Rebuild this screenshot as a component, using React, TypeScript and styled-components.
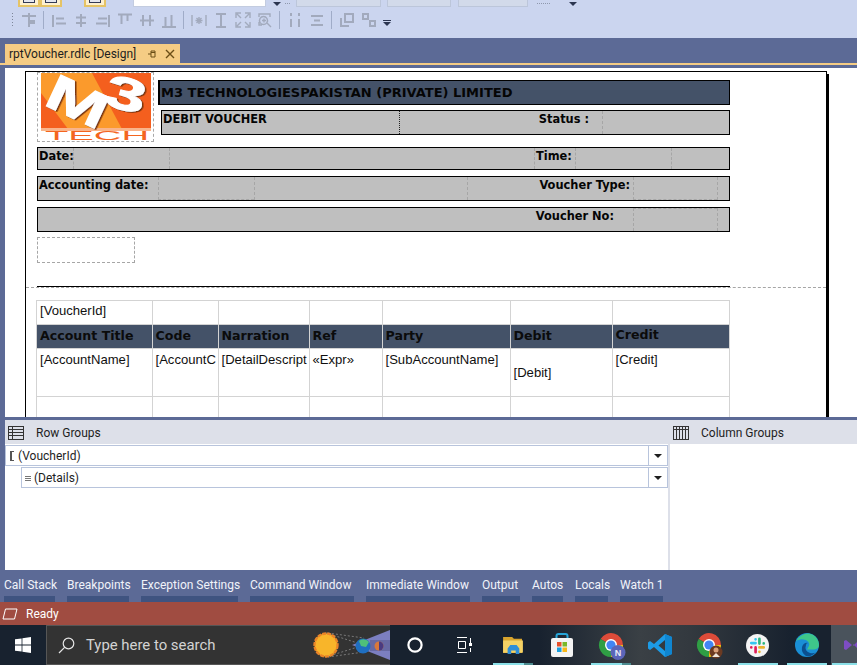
import React from "react";
import styled, { createGlobalStyle } from "styled-components";

const Global = createGlobalStyle`
  html, body {
    margin: 0;
    padding: 0;
    height: 665px;
    overflow: hidden;
    background: #5c6a96;
  }
  * { box-sizing: border-box; }
`;

const Shell = styled.div`
  width: 857px;
  height: 665px;
  display: flex;
  flex-direction: column;
  overflow: hidden;
  font-family: Roboto, "Noto Sans", sans-serif;
`;

/* ---------- toolbars ---------- */

const Toolbar = styled.div`
  height: 38px;
  flex: none;
  background: #cbd5ef;
`;

const ClippedRow = styled.div`
  height: 7px;
  display: flex;
  align-items: flex-end;
  overflow: hidden;
  padding-left: 18px;
`;

const ToolToggle = styled.div<{ $after?: number }>`
  width: 22px;
  height: 20px;
  flex: none;
  display: flex;
  align-items: flex-end;
  padding: 0 3px 2px;
  background: #fdf0d0;
  border: 2px solid #e5c365;
  margin-right: ${(p) => p.$after ?? 0}px;
  &::after {
    content: "";
    display: block;
    width: 100%;
    height: 10px;
    border: 1px solid #333a55;
    background: #e4e6ee;
  }
`;

const ClippedCombo = styled.div<{ $w: number; $after: number; $off?: boolean }>`
  width: ${(p) => p.$w}px;
  height: 20px;
  flex: none;
  margin-right: ${(p) => p.$after}px;
  background: ${(p) => (p.$off ? "#d2daea" : "#ffffff")};
  border: 1px solid ${(p) => (p.$off ? "#bcc6da" : "#c3cce0")};
`;

const MiniArrow = styled.div<{ $after: number }>`
  width: 0;
  height: 0;
  flex: none;
  margin: 0 ${(p) => p.$after}px 1px 0;
  border-left: 4px solid transparent;
  border-right: 4px solid transparent;
  border-top: 4px solid #2b3550;
`;

const DotRun = styled.div<{ $w: number; $after: number }>`
  width: ${(p) => p.$w}px;
  flex: none;
  margin: 0 ${(p) => p.$after}px 3px 0;
  border-top: 1px dotted #8f98ad;
`;

const IconRow = styled.div`
  display: flex;
  align-items: center;
  height: 18px;
  margin-top: 4px;
  padding-left: 11px;
  color: #a2aabd;
`;

const Grip = styled.div`
  width: 4px;
  height: 16px;
  margin-right: 3px;
  background-image: radial-gradient(#7d8699 0.8px, transparent 1px);
  background-size: 3px 3px;
`;

const Sep = styled.div`
  width: 1px;
  height: 18px;
  margin: 0 4px 0 3px;
  background: #a0acc8;
`;

const IconBox = styled.svg`
  width: 22px;
  height: 16px;
  flex: none;
  fill: none;
  stroke: currentColor;
`;

const OverflowArrow = styled.div`
  margin: 6px 0 0 3px;
  width: 8px;
  border-top: 1px solid #2b3550;
  padding-top: 1px;
  &::after {
    content: "";
    display: block;
    border-left: 4px solid transparent;
    border-right: 4px solid transparent;
    border-top: 4px solid #2b3550;
  }
`;

const groupA = [
  "M8 1V15M1 4H15M8 9H14M8 11H14",
];
const groupB = [
  "M2 3V15M5 6.5H13M5 11.5H15",
  "M8 2V15M3 5.5H13M3 11H13",
  "M14 3V15M3 6.5H12M1 11.5H12",
  "M1 2.5H15M4.5 3V12M10.5 3V9",
  "M1 8.5H15M4 3V14M11 3V14",
  "M1 15H15M4.5 5V14M10.5 3V14",
];
const groupC = [
  "M1 3V14M15 3V14M4.5 8.5H11.5M8 5V12M5.5 6L10.5 11M10.5 6L5.5 11",
  "M3 2H13M3 15H13M8 2V15",
  "M1 6V1H6M10 1H15V6M1 10V15H6M15 10V15H10M2 2L6 6M14 2L10 6M2 14L6 10M14 14L10 10",
  "M2 5V2H13V5M2 10V13H5M6.5 4.5a4 4 0 1 0 .01 0M10 11L14 15M5 8.5H9M7 6.5V10.5",
];
const groupD = [
  "M4 1V4M4 7V15M12 1V4M12 7V15",
  "M2 4H14M5 8.5H11M2 13H14",
];
const groupE = [
  "M6 2H14V10H6ZM2 6V14H10",
  "M2 2H7V7H2ZM9 9H14V14H9Z",
];

const Glyphs = ({ list }: { list: string[] }) => (
  <>
    {list.map((d) => (
      <IconBox key={d} viewBox="-3 0 22 16" strokeWidth={d.length > 40 ? 1.4 : 2}>
        <path d={d} />
      </IconBox>
    ))}
  </>
);

/* ---------- document tab ---------- */

const TabStrip = styled.div`
  height: 30px;
  flex: none;
  background: #5c6a96;
  padding-top: 6px;
`;

const DocTab = styled.div`
  margin-left: 5px;
  width: 175px;
  height: 19px;
  background: #f5cc84;
  display: flex;
  align-items: center;
  gap: 8px;
  padding: 0 5px 0 4px;
  color: #1e1e1e;
  font-size: 12px;
  white-space: nowrap;
`;

const TabLabel = styled.span`
  flex: 1;
`;

const TabGlyph = styled.svg`
  width: 10px;
  height: 10px;
  flex: none;
  stroke: #6b4e16;
  fill: none;
`;

const TabRule = styled.div`
  height: 2px;
  background: #f5cc84;
`;

/* ---------- report surface ---------- */

const Designer = styled.div`
  height: 349px;
  flex: none;
  padding-left: 5px;
  background: #5c6a96;
`;

const Surface = styled.div`
  height: 100%;
  background: #ffffff;
  padding: 3px 0 0 20px;
  overflow: hidden;
`;

const Page = styled.div`
  width: 802px;
  height: 500px;
  border: 1px solid #000;
  box-shadow: 2px 3px 0 #000;
  padding-left: 11px;
`;

const Masthead = styled.div`
  display: flex;
  align-items: flex-start;
  width: 693px;
`;

const LogoFrame = styled.div`
  width: 117px;
  height: 70px;
  flex: none;
  border: 1px dashed #a8a8a8;
  padding: 0 2px;
`;

const LogoArt = styled.svg`
  display: block;
  width: 111px;
  height: 67px;
  overflow: visible;
`;

const HeadColumn = styled.div`
  flex: 1;
  margin-left: 4px;
  padding-top: 8px;
`;

const TitleBar = styled.div`
  height: 25px;
  background: #445268;
  border: 1px solid #000;
  border-left-width: 2px;
  display: flex;
  align-items: center;
  padding-left: 1px;
  font: bold 13px "DejaVu Sans", Verdana, sans-serif;
  color: #050505;
  white-space: nowrap;
`;

const Bar = styled.div<{ $cols: string; $h: number; $mt: number; $ml?: number }>`
  display: grid;
  grid-template-columns: ${(p) => p.$cols};
  height: ${(p) => p.$h}px;
  margin-top: ${(p) => p.$mt}px;
  margin-left: ${(p) => p.$ml ?? 0}px;
  width: ${(p) => 693 - (p.$ml ?? 0)}px;
  background: #bfbfbf;
  border: 1px solid #000;
`;

const SubBar = styled(Bar)`
  width: 569px;
`;

const Cell = styled.div<{
  $dash?: "top" | "bottom";
  $dark?: boolean;
  $right?: number;
  $plain?: boolean;
}>`
  min-width: 0;
  padding: 1px ${(p) => p.$right ?? 0}px 0 1px;
  text-align: ${(p) => (p.$right != null ? "right" : "left")};
  font: bold 11.4px "DejaVu Sans", Verdana, sans-serif;
  color: #050505;
  white-space: nowrap;
  border-left: ${(p) => (p.$plain ? "0" : p.$dark ? "1px dotted #222" : "1px dashed #a6a6a6")};
  ${(p) => (p.$dash === "top" ? "border-top: 1px dashed #a6a6a6;" : "")}
  ${(p) => (p.$dash === "bottom" ? "border-bottom: 1px dashed #a6a6a6;" : "")}
`;

const EmptyBox = styled.div`
  width: 98px;
  height: 26px;
  margin-top: 5px;
  border: 1px dashed #a6a6a6;
`;

const BlackRule = styled.div`
  width: 693px;
  height: 1px;
  margin-top: 23px;
  background: #000;
`;

const PageBreak = styled.div`
  margin-left: -11px;
  width: 800px;
  border-top: 1px dashed #a6a6a6;
`;

const ReportTable = styled.table`
  width: 693px;
  margin: 12px 0 0 -1px;
  table-layout: fixed;
  border-collapse: collapse;
`;

const Td = styled.td<{ $h?: number; $drop?: number }>`
  height: ${(p) => p.$h ?? 24}px;
  padding: ${(p) => 1 + (p.$drop ?? 0)}px 3px 0 3px;
  vertical-align: top;
  border: 1px solid #d3d3d3;
  font: 13.1px "Liberation Sans", Arial, sans-serif;
  color: #101010;
  white-space: nowrap;
  overflow: hidden;
`;

const HeadTd = styled.td<{ $up?: boolean }>`
  height: 24px;
  padding: ${(p) => (p.$up ? 2 : 3)}px 0 0 3px;
  vertical-align: top;
  background: #445268;
  border: 1px solid #d3d3d3;
  font: bold 12.6px "DejaVu Sans", Verdana, sans-serif;
  line-height: 15px;
  color: #0b0b0b;
  white-space: nowrap;
  overflow: hidden;
`;

/* ---------- grouping pane ---------- */

const GroupPane = styled.div`
  height: 153px;
  flex: none;
  display: flex;
  background: #ffffff;
  border-left: 5px solid #5c6a96;
  border-top: 3px solid #5c6a96;
`;

const PaneColumn = styled.div<{ $w?: number }>`
  ${(p) => (p.$w ? `width: ${p.$w}px; flex: none;` : "flex: 1;")}
`;

const PaneHead = styled.div<{ $gap: number }>`
  height: 24px;
  display: flex;
  align-items: center;
  gap: ${(p) => p.$gap}px;
  padding: 2px 0 0 3px;
  background: #dde0e9;
  font-size: 12px;
  color: #1e1e1e;
`;

const PaneBody = styled.div`
  height: 126px;
  border-right: 2px solid #dde0e9;
  padding-top: 1px;
`;

const GroupRow = styled.div<{ $indent: number }>`
  height: 21px;
  margin: 0 0 1px ${(p) => p.$indent}px;
  display: flex;
  align-items: center;
  border: 1px solid #b8c4dc;
  font-size: 12px;
  color: #1e1e1e;
`;

const RowMark = styled.div`
  flex: none;
  width: 4px;
  height: 10px;
  margin: 0 4px 0 4px;
  border-left: 2px solid #555;
  border-top: 1px solid #555;
  border-bottom: 1px solid #555;
`;

const DetailMark = styled.div`
  flex: none;
  width: 6px;
  height: 5px;
  margin: 1px 3px 0 3px;
  border-top: 1px solid #777;
  border-bottom: 1px solid #777;
  background: linear-gradient(#777, #777) center / 100% 1px no-repeat;
`;

const RowLabel = styled.span`
  flex: 1;
`;

const RowDrop = styled.div`
  width: 19px;
  height: 100%;
  flex: none;
  border-left: 1px solid #b8c4dc;
  display: flex;
  align-items: center;
  justify-content: center;
  &::after {
    content: "";
    border-left: 4px solid transparent;
    border-right: 4px solid transparent;
    border-top: 4px solid #1e1e1e;
  }
`;

/* ---------- tool windows, status, taskbar ---------- */

const ToolTabs = styled.div`
  height: 32px;
  flex: none;
  display: flex;
  gap: 12px;
  padding-left: 4px;
  background: #5c6a96;
`;

const ToolTab = styled.div<{ $w: number }>`
  width: ${(p) => p.$w}px;
  flex: none;
  display: flex;
  flex-direction: column;
  justify-content: flex-end;
  font-size: 12px;
  line-height: 16px;
  color: #f1f3fa;
  white-space: nowrap;
  &::after {
    content: "";
    display: block;
    height: 6px;
    margin-top: 3px;
    background: #3f5380;
  }
`;

const StatusBar = styled.div`
  height: 23px;
  flex: none;
  display: flex;
  align-items: center;
  gap: 8px;
  padding-left: 2px;
  background: #a04c41;
  font-size: 12px;
  color: #ffffff;
`;

const Taskbar = styled.div`
  height: 40px;
  flex: none;
  display: flex;
  background: linear-gradient(90deg, #18222f 0, #18222f 540px, #3a4045 640px, #33393f 690px, #18222f 790px);
`;

const StartButton = styled.div`
  width: 46px;
  flex: none;
  display: flex;
  align-items: center;
  justify-content: center;
`;

const SearchBox = styled.div`
  width: 344px;
  flex: none;
  display: flex;
  align-items: center;
  background: #333333;
  border: 1px solid #565656;
  border-right: 0;
  padding-left: 11px;
  color: #d3d3d3;
  font-size: 14.9px;
  white-space: nowrap;
`;

const SearchText = styled.span`
  margin-left: 11px;
  flex: 1;
`;

const TaskButton = styled.div<{ $run?: "stack" | "wide"; $lit?: boolean; $w?: number }>`
  position: relative;
  width: ${(p) => p.$w ?? 49}px;
  flex: none;
  display: flex;
  align-items: center;
  justify-content: ${(p) => (p.$lit ? "flex-start" : "center")};
  padding-left: ${(p) => (p.$lit ? 12 : 0)}px;
  overflow: hidden;
  background: ${(p) => (p.$lit ? "#4a535c" : "transparent")};
  &::after {
    content: ${(p) => (p.$run ? '""' : "none")};
    position: absolute;
    bottom: 0;
    left: ${(p) => (p.$lit ? 1 : 5)}px;
    right: ${(p) => (p.$lit ? 0 : 4)}px;
    height: 2px;
    background: ${(p) =>
      p.$run === "stack"
        ? "linear-gradient(90deg, #8be0e8 0, #8be0e8 31px, #4d8b8f 31px)"
        : "#8be0e8"};
  }
`;

const TaskIcon = styled.svg`
  display: block;
  flex: none;
`;

const ChromeMark = () => (
  <>
    <path d="M12 12L1.6 6A12 12 0 0 1 24 12Z" fill="#dd4b39" />
    <path d="M12 12L24 12A12 12 0 0 1 12 24Z" fill="#f4c20d" />
    <path d="M12 12L12 24A12 12 0 0 1 1.6 6Z" fill="#2f9e44" />
    <circle cx="12" cy="12" r="6" fill="#ffffff" />
    <circle cx="12" cy="12" r="4.6" fill="#4285f4" />
  </>
);

const columns = [115.5, 66, 91, 73, 128, 102, 117.5];

export default function App() {
  return (
    <Shell>
      <Global />
      <Toolbar>
        <ClippedRow>
          <ToolToggle />
          <ToolToggle $after={22} />
          <ToolToggle $after={27} />
          <ClippedCombo $w={133} $after={7} />
          <MiniArrow $after={4} />
          <DotRun $w={5} $after={6} />
          <ClippedCombo $w={85} $after={6} $off />
          <ClippedCombo $w={64} $after={7} $off />
          <ClippedCombo $w={70} $after={9} $off />
          <DotRun $w={13} $after={19} />
          <MiniArrow $after={0} />
        </ClippedRow>
        <IconRow>
          <Grip />
          <Glyphs list={groupA} />
          <Sep />
          <Glyphs list={groupB} />
          <Sep />
          <Glyphs list={groupC} />
          <Sep />
          <Glyphs list={groupD} />
          <Sep />
          <Glyphs list={groupE} />
          <OverflowArrow />
        </IconRow>
      </Toolbar>

      <TabStrip>
        <DocTab>
          <TabLabel>rptVoucher.rdlc [Design]</TabLabel>
          <TabGlyph viewBox="0 0 10 10">
            <path d="M1 5H4M4 2V8H8V2ZM4 3.5H8" />
          </TabGlyph>
          <TabGlyph viewBox="0 0 10 10" strokeWidth={1.4}>
            <path d="M1 1L9 9M9 1L1 9" />
          </TabGlyph>
        </DocTab>
        <TabRule />
      </TabStrip>

      <Designer>
        <Surface>
          <Page>
            <Masthead>
              <LogoFrame>
                <LogoArt viewBox="0 0 111 67">
                  <defs>
                    <filter id="logoShade" x="-10%" y="-10%" width="120%" height="120%">
                      <feDropShadow dx="1.5" dy="1" stdDeviation="0.3" floodColor="#7a3410" />
                    </filter>
                  </defs>
                  <rect x="1" y="0" width="110" height="56" fill="#f45f1e" />
                  <path d="M1 0H52L82 56H28L1 20Z" fill="#fb9a2c" />
                  <rect x="1" y="55" width="110" height="3" fill="#f9b48a" />
                  <g
                    filter="url(#logoShade)"
                    fill="#ffffff"
                    stroke="#ffffff"
                    strokeWidth="1"
                    fontFamily="Liberation Sans, Arial, sans-serif"
                    fontWeight="bold"
                  >
                    <text transform="translate(2 31) rotate(25) scale(1.5 1)" fontSize="50">M</text>
                    <text transform="translate(62 31) rotate(15) scale(1.6 1)" fontSize="46">3</text>
                  </g>
                  <text
                    x="5"
                    y="67"
                    fontSize="12.5"
                    fill="#f4651f"
                    fontFamily="Liberation Sans, Arial, sans-serif"
                    textLength="104"
                    lengthAdjust="spacingAndGlyphs"
                  >
                    TECH
                  </text>
                </LogoArt>
              </LogoFrame>
              <HeadColumn>
                <TitleBar>M3 TECHNOLOGIESPAKISTAN (PRIVATE) LIMITED</TitleBar>
                <SubBar $cols="237px 203px 1fr" $h={25} $mt={5} $ml={3}>
                  <Cell $plain>DEBIT VOUCHER</Cell>
                  <Cell $dark $right={13}>
                    Status :
                  </Cell>
                  <Cell />
                </SubBar>
              </HeadColumn>
            </Masthead>

            <Bar $cols="35px 96px 365px 41px 96px 1fr" $h={23} $mt={5}>
              <Cell $plain>Date:</Cell>
              <Cell />
              <Cell />
              <Cell>Time:</Cell>
              <Cell />
              <Cell />
            </Bar>
            <Bar $cols="120px 96px 213px 166px 84px 1fr" $h={25} $mt={6}>
              <Cell $plain>Accounting date:</Cell>
              <Cell $dash="bottom" />
              <Cell />
              <Cell $right={3}>Voucher Type:</Cell>
              <Cell $dash="bottom" />
              <Cell />
            </Bar>
            <Bar $cols="595px 84px 1fr" $h={25} $mt={6}>
              <Cell $plain $right={19}>
                Voucher No:
              </Cell>
              <Cell $dash="top" />
              <Cell />
            </Bar>
            <EmptyBox />
            <BlackRule />
            <PageBreak />

            <ReportTable>
              <colgroup>
                {columns.map((w, i) => (
                  <col key={i} style={{ width: w }} />
                ))}
              </colgroup>
              <tbody>
                <tr>
                  <Td $drop={1}>[VoucherId]</Td>
                  <Td /><Td /><Td /><Td /><Td /><Td />
                </tr>
                <tr>
                  <HeadTd>Account Title</HeadTd>
                  <HeadTd>Code</HeadTd>
                  <HeadTd>Narration</HeadTd>
                  <HeadTd>Ref</HeadTd>
                  <HeadTd>Party</HeadTd>
                  <HeadTd>Debit</HeadTd>
                  <HeadTd $up>Credit</HeadTd>
                </tr>
                <tr>
                  <Td $h={48} $drop={2}>[AccountName]</Td>
                  <Td $h={48} $drop={2}>[AccountC</Td>
                  <Td $h={48} $drop={2}>[DetailDescript</Td>
                  <Td $h={48} $drop={2}>«Expr»</Td>
                  <Td $h={48} $drop={2}>[SubAccountName]</Td>
                  <Td $h={48} $drop={15}>[Debit]</Td>
                  <Td $h={48} $drop={2}>[Credit]</Td>
                </tr>
                <tr>
                  <Td /><Td /><Td /><Td /><Td /><Td /><Td />
                </tr>
              </tbody>
            </ReportTable>
          </Page>
        </Surface>
      </Designer>

      <GroupPane>
        <PaneColumn $w={665}>
          <PaneHead $gap={12}>
            <svg width="16" height="14" viewBox="0 0 16 14" fill="none" stroke="#333">
              <rect x="0.5" y="0.5" width="15" height="13" />
              <path d="M0 3.5H16M0 6.5H16M0 9.5H16M4.5 0V14" />
            </svg>
            Row Groups
          </PaneHead>
          <PaneBody>
            <GroupRow $indent={0}>
              <RowMark />
              <RowLabel>(VoucherId)</RowLabel>
              <RowDrop />
            </GroupRow>
            <GroupRow $indent={16}>
              <DetailMark />
              <RowLabel>(Details)</RowLabel>
              <RowDrop />
            </GroupRow>
          </PaneBody>
        </PaneColumn>
        <PaneColumn>
          <PaneHead $gap={12}>
            <svg width="16" height="14" viewBox="0 0 16 14" fill="none" stroke="#333">
              <rect x="0.5" y="0.5" width="15" height="13" />
              <path d="M0 3.5H16M3.5 0V14M6.5 0V14M9.5 0V14M12.5 0V14" />
            </svg>
            Column Groups
          </PaneHead>
        </PaneColumn>
      </GroupPane>

      <ToolTabs>
        <ToolTab $w={51}>Call Stack</ToolTab>
        <ToolTab $w={62}>Breakpoints</ToolTab>
        <ToolTab $w={97}>Exception Settings</ToolTab>
        <ToolTab $w={104}>Command Window</ToolTab>
        <ToolTab $w={104}>Immediate Window</ToolTab>
        <ToolTab $w={38}>Output</ToolTab>
        <ToolTab $w={31}>Autos</ToolTab>
        <ToolTab $w={33}>Locals</ToolTab>
        <ToolTab $w={43}>Watch 1</ToolTab>
      </ToolTabs>

      <StatusBar>
        <svg width="16" height="12" viewBox="0 0 16 12" fill="none" stroke="#fff">
          <path d="M3.5 1H15L12.5 11H1Z" />
        </svg>
        Ready
      </StatusBar>

      <Taskbar>
        <StartButton>
          <TaskIcon width="16" height="16" viewBox="0 0 16 16" fill="#ffffff">
            <path d="M0 2.3L6.6 1.4V7.6H0ZM7.4 1.3L16 0V7.6H7.4ZM0 8.4H6.6V14.6L0 13.7ZM7.4 8.4H16V16L7.4 14.7Z" />
          </TaskIcon>
        </StartButton>
        <SearchBox>
          <TaskIcon width="17" height="17" viewBox="0 0 17 17" fill="none" stroke="#e6e6e6" strokeWidth="1.2">
            <circle cx="10.5" cy="6.5" r="5.3" />
            <path d="M6.6 10.4L1 16" />
          </TaskIcon>
          <SearchText>Type here to search</SearchText>
          <TaskIcon width="78" height="38" viewBox="0 0 78 38">
            <path d="M40 19L78 4V34Z" fill="#7c7fc0" />
            <path d="M58 14H78V25H58Z" fill="#5a5a90" opacity="0.6" />
            <path d="M14 7L52 19M14 31L52 19M16 7L52 12M16 31L52 26" stroke="#8a8a8a" strokeWidth="0.8" strokeDasharray="2 2" fill="none" />
            <circle cx="14" cy="19" r="11.5" fill="#f8b52a" stroke="#ea8428" strokeWidth="2.4" strokeDasharray="4 1" />
            <circle cx="51" cy="20" r="7.5" fill="#1f6fc0" />
            <path d="M47 15a7 7 0 0 1 10 1l-3 5-5-1Z" fill="#4fc07a" />
            <circle cx="67" cy="20" r="4.5" fill="#d9783a" />
            <path d="M67 15.5a4.5 4.5 0 0 1 0 9Z" fill="#4a3a80" />
          </TaskIcon>
        </SearchBox>
        <TaskButton>
          <TaskIcon width="16" height="16" viewBox="0 0 16 16" fill="none" stroke="#ffffff" strokeWidth="2.2">
            <circle cx="8" cy="8" r="6.6" />
          </TaskIcon>
        </TaskButton>
        <TaskButton>
          <TaskIcon width="16" height="16" viewBox="0 0 16 16" fill="none" stroke="#ffffff">
            <path d="M1 0.5H11M1 15.5H11M2.5 4.5H9.5V11.5H2.5ZM14.5 1V6M14.5 11V15" />
            <rect x="13" y="6" width="3" height="3" fill="#ffffff" stroke="none" />
          </TaskIcon>
        </TaskButton>
        <TaskButton $run="stack">
          <TaskIcon width="22" height="18" viewBox="0 0 24 20">
            <path d="M1 1H11L13 3H22V19H1Z" fill="#d9a52e" />
            <path d="M1 5H23V18.5H1Z" fill="#f5d265" />
            <path d="M6 14L9 10H16L19 14V20H15V16H10V20H6Z" fill="#2f8ed8" />
          </TaskIcon>
        </TaskButton>
        <TaskButton>
          <TaskIcon width="24" height="25" viewBox="0 0 24 25">
            <path d="M6.5 7V3Q6.5 1 8.5 1H15.5Q17.5 1 17.5 3V7" fill="none" stroke="#26a5d8" strokeWidth="2" />
            <rect x="1" y="5" width="22" height="19" rx="2" fill="#f3f3f3" />
            <rect x="7" y="9" width="4.5" height="4.5" fill="#e8502a" />
            <rect x="12.5" y="9" width="4.5" height="4.5" fill="#7ab829" />
            <rect x="7" y="14.5" width="4.5" height="4.5" fill="#18a0e0" />
            <rect x="12.5" y="14.5" width="4.5" height="4.5" fill="#f8b818" />
          </TaskIcon>
        </TaskButton>
        <TaskButton $run="stack">
          <TaskIcon width="32" height="32" viewBox="-4 -4 32 32">
            <ChromeMark />
            <circle cx="19" cy="19.5" r="7.5" fill="#5b65b8" />
            <text x="19" y="23" fontSize="9" fontWeight="bold" textAnchor="middle" fill="#e8eaf8" fontFamily="Liberation Sans, Arial, sans-serif">
              N
            </text>
          </TaskIcon>
        </TaskButton>
        <TaskButton>
          <TaskIcon width="24" height="25" viewBox="0 0 24 25">
            <path d="M17 1L24 4V21L17 24L6 14L2 17L0 15.5V9.5L2 8L6 11Z" fill="#1c9be6" />
            <path d="M17 7L10.5 12.5L17 18Z" fill="#33393f" />
            <path d="M17 1L24 4V21L17 24Z" fill="#0f86d1" />
          </TaskIcon>
        </TaskButton>
        <TaskButton>
          <TaskIcon width="32" height="32" viewBox="-4 -4 32 32">
            <ChromeMark />
            <circle cx="19" cy="19" r="6.5" fill="#6b3a22" />
            <circle cx="19" cy="17" r="2.5" fill="#d9a07a" />
            <path d="M15 24L19 20L23 24Z" fill="#efe6dc" />
          </TaskIcon>
        </TaskButton>
        <TaskButton $run="wide">
          <TaskIcon width="23" height="23" viewBox="0 0 24 24">
            <circle cx="12" cy="12" r="12" fill="#f4f4f4" />
            <g strokeWidth="2.8" strokeLinecap="round" fill="none">
              <path d="M10 5.5V5.6M10 9.5H5.5" stroke="#36c5f0" />
              <path d="M14 5V10M18.5 9.8V9.9" stroke="#2eb67d" />
              <path d="M14 18.5V18.6M14 14H18.5" stroke="#ecb22e" />
              <path d="M10 14V19M5.5 14V14.1" stroke="#e01e5a" />
            </g>
          </TaskIcon>
        </TaskButton>
        <TaskButton $run="wide">
          <TaskIcon width="24" height="24" viewBox="0 0 24 24">
            <circle cx="12" cy="12" r="12" fill="#1a8fd6" />
            <path d="M1 8Q6 0 14 0.5Q23 2 24 12Q24 16 19 16.5H12Q17 10 11 7Q5 5 1 8Z" fill="#3ec68a" />
            <path d="M11 12Q9 18 15 20Q19 21 21 19Q17 24 11 23Q6 20 7 14Q9 9 13 10Q11 10 11 12Z" fill="#0b4f8f" />
          </TaskIcon>
        </TaskButton>
        <TaskButton $run="wide" $lit $w={26}>
          <TaskIcon width="24" height="24" viewBox="0 0 24 24">
            <path d="M3 7L9 12L3 17L1 16V8Z M10 13L20 3L24 5V19L20 21L10 11Z" fill="#7d4dc4" />
            <path d="M20 8L14 12L20 16Z" fill="#4a535c" />
          </TaskIcon>
        </TaskButton>
      </Taskbar>
    </Shell>
  );
}
